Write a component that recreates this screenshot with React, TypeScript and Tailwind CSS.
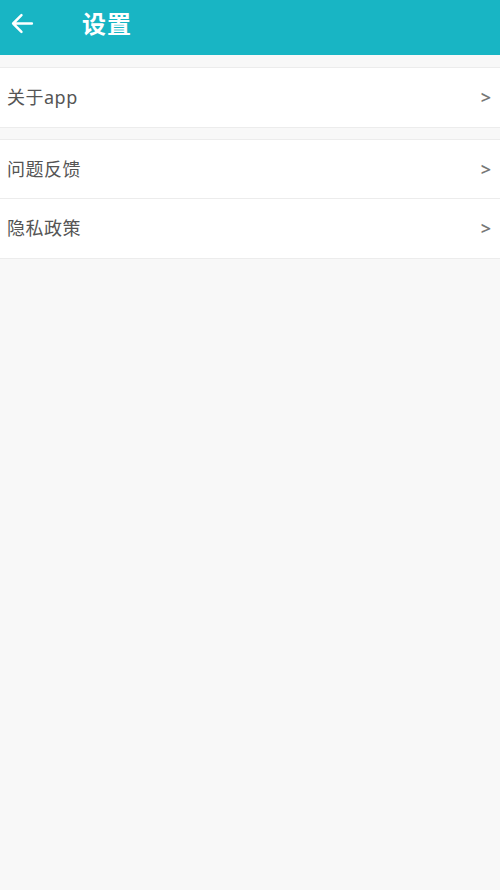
import React from "react";

const font = { fontFamily: '"Noto Sans", "Noto Sans CJK SC", sans-serif' };

function Row({ label, border }: { label: string; border?: boolean }) {
  return (
    <div className={`flex h-[59px] items-center justify-between bg-white pl-[7px] pr-[9px] ${border ? "border-b border-[#ececec]" : ""}`}>
      <span className="text-[18px] tracking-[0.5px] text-[#555]">{label}</span>
      <span className="text-[18px] font-semibold text-[#777]">&gt;</span>
    </div>
  );
}

export default function App() {
  return (
    <div className="min-h-[890px] w-[500px] bg-[#f8f8f8]" style={font}>
      <div className="flex h-[55px] items-center bg-[#18b5c4] pb-[8px] text-white">
        <svg className="ml-[10px]" width="25" height="25" viewBox="0 0 24 24" fill="none" stroke="white" strokeWidth="2.4" strokeLinecap="round" strokeLinejoin="round">
          <path d="M21 12H3M11 4l-8 8 8 8" />
        </svg>
        <span className="ml-[47px] text-[24px] font-bold tracking-[1px]">设置</span>
      </div>
      <div className="h-[12px]" />
      <div className="border-y border-[#ececec]">
        <Row label="关于app" />
      </div>
      <div className="h-[11px]" />
      <div className="border-y border-[#ececec]">
        <Row label="问题反馈" border />
        <Row label="隐私政策" />
      </div>
    </div>
  );
}
